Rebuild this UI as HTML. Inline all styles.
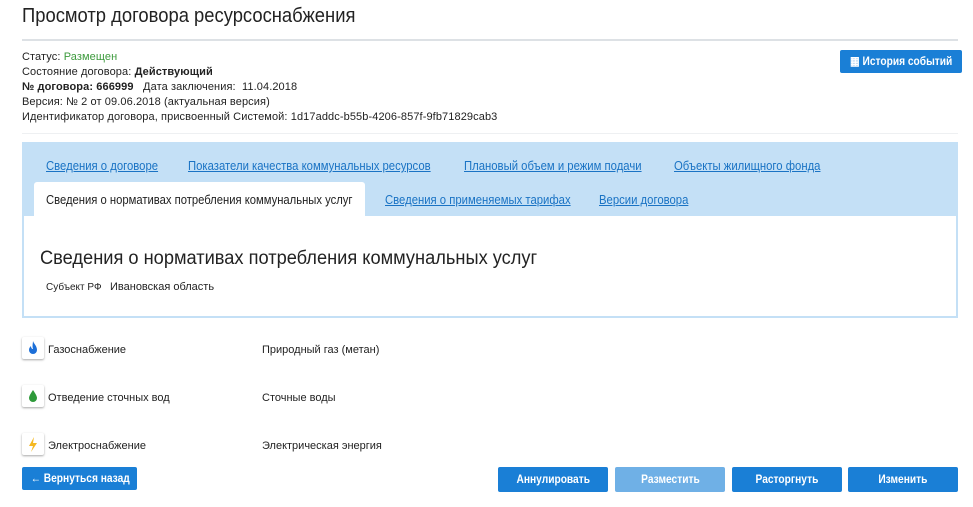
<!DOCTYPE html>
<html><head><meta charset="utf-8"><style>
*{box-sizing:border-box;margin:0;padding:0}
body{width:973px;height:507px;background:#fff;font-family:"Liberation Sans",sans-serif;color:#222;position:relative;overflow:hidden}
.a{position:absolute;white-space:nowrap}
h1{position:absolute;left:22px;top:5px;font-size:20px;font-weight:normal;color:#222;white-space:nowrap;transform:scaleX(0.92);transform-origin:left}
.hr{position:absolute;left:22px;top:39px;width:936px;height:2px;background:#dde1e5}
.info{font-size:11px;line-height:15px;left:22px;top:50px;letter-spacing:0.1px}
.btn{position:absolute;background:#1a7fd6;color:#fff;font-weight:bold;font-size:12px;text-align:center;border-radius:2px;white-space:nowrap}
.btn span{display:inline-block;transform:scaleX(0.85)}
.panel{position:absolute;left:22px;top:142px;width:936px;height:176px;background:#c4e0f6}
.inner{position:absolute;left:2px;top:74px;width:932px;height:100px;background:#fff}
.tab{position:absolute;font-size:13px;color:#1a73c4;text-decoration:underline;white-space:nowrap;transform:scaleX(0.87);transform-origin:left}
.act{position:absolute;left:12px;top:40px;width:331px;height:34px;background:#fff;border-radius:3px 3px 0 0}
.act span{position:absolute;left:12px;top:10px;font-size:13px;white-space:nowrap;transform:scaleX(0.865);transform-origin:left}
.ic{position:absolute;left:22px;width:22px;height:22px;background:#fff;border-radius:2px;box-shadow:0 1px 2px rgba(0,0,0,.35)}
.row{position:absolute;font-size:11px}
</style></head><body>
<h1>Просмотр договора ресурсоснабжения</h1>
<div class="hr"></div>
<div class="a info">Статус: <span style="color:#3c9a3c">Размещен</span><br>Состояние договора: <b>Действующий</b><br><b>№ договора: 666999</b>&nbsp;&nbsp; Дата заключения:&nbsp; 11.04.2018<br>Версия: № 2 от 09.06.2018 (актуальная версия)<br>Идентификатор договора, присвоенный Системой: 1d17addc-b55b-4206-857f-9fb71829cab3</div>
<div class="btn" style="left:840px;top:50px;width:122px;height:23px;line-height:23px"><span>▦ История событий</span></div>
<div class="a" style="left:22px;top:133px;width:936px;height:1px;background:#eef0f2"></div>
<div class="panel">
<span class="tab" style="left:24px;top:16px">Сведения о договоре</span>
<span class="tab" style="left:166px;top:16px">Показатели качества коммунальных ресурсов</span>
<span class="tab" style="left:442px;top:16px">Плановый объем и режим подачи</span>
<span class="tab" style="left:652px;top:16px">Объекты жилищного фонда</span>
<div class="act"><span>Сведения о нормативах потребления коммунальных услуг</span></div>
<span class="tab" style="left:363px;top:50px">Сведения о применяемых тарифах</span>
<span class="tab" style="left:577px;top:50px">Версии договора</span>
<div class="inner">
<div class="a" style="left:16px;top:32px;font-size:19px;transform:scaleX(0.96);transform-origin:left">Сведения о нормативах потребления коммунальных услуг</div>
<div class="a" style="left:22px;top:66px;font-size:10px">Субъект РФ</div>
<div class="a" style="left:86px;top:65px;font-size:11px">Ивановская область</div>
</div></div>
<div class="ic" style="top:337px"><svg width="22" height="22"><path d="M11 4c1 3 4 5 4 9a4 4 0 0 1-8 0c0-2 1-3 2-4 0 2 1 3 2 3-1-3 0-6 0-8z" fill="#1c6fd8"/></svg></div>
<div class="ic" style="top:385px"><svg width="22" height="22"><path d="M11 5c2 3 4 6 4 8a4 4 0 0 1-8 0c0-2 2-5 4-8z" fill="#2e9a3a"/></svg></div>
<div class="ic" style="top:433px"><svg width="22" height="22"><path d="M12 4l-5 9h4l-2 6 6-9h-4z" fill="#f5b820"/></svg></div>
<div class="row" style="left:48px;top:344px">Газоснабжение</div><div class="row" style="left:262px;top:344px">Природный газ (метан)</div>
<div class="row" style="left:48px;top:392px">Отведение сточных вод</div><div class="row" style="left:262px;top:392px">Сточные воды</div>
<div class="row" style="left:48px;top:440px">Электроснабжение</div><div class="row" style="left:262px;top:440px">Электрическая энергия</div>
<div class="btn" style="left:22px;top:467px;width:115px;height:23px;line-height:23px"><span>← Вернуться назад</span></div>
<div class="btn" style="left:498px;top:467px;width:110px;height:25px;line-height:25px"><span>Аннулировать</span></div>
<div class="btn" style="left:615px;top:467px;width:110px;height:25px;line-height:25px;background:#6fb0e6"><span>Разместить</span></div>
<div class="btn" style="left:732px;top:467px;width:110px;height:25px;line-height:25px"><span>Расторгнуть</span></div>
<div class="btn" style="left:848px;top:467px;width:110px;height:25px;line-height:25px"><span>Изменить</span></div>
</body></html>
